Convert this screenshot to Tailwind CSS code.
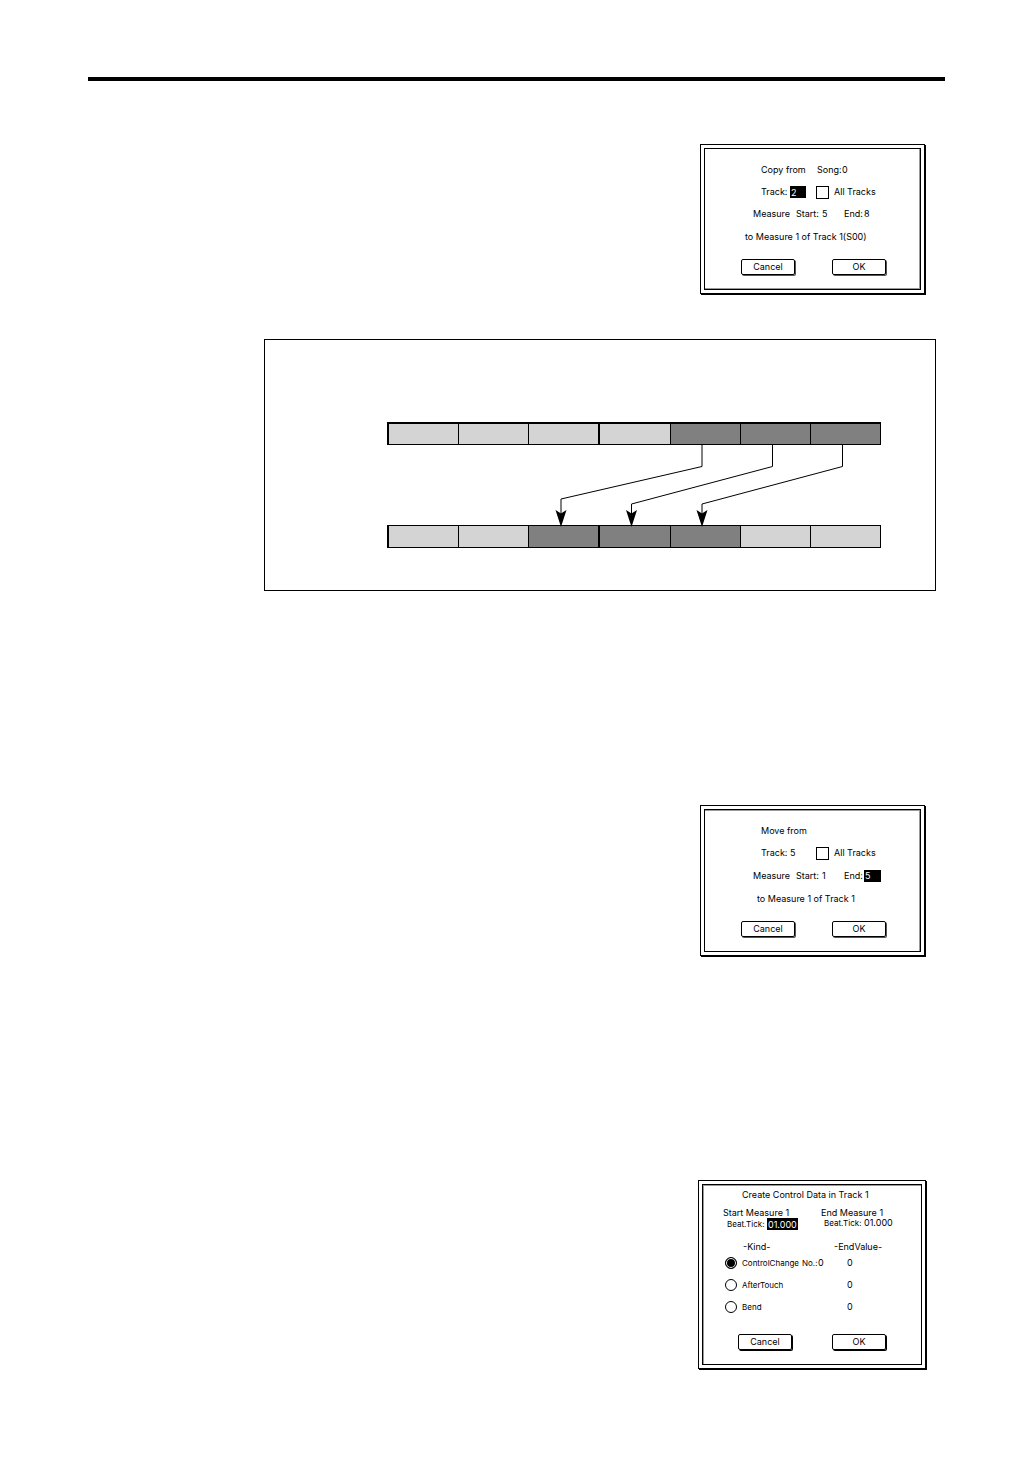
<!DOCTYPE html>
<html lang="en">
<head>
    <meta charset="UTF-8">
    <meta name="viewport" content="width=device-width, initial-scale=1.0">
    <title>Copy / Move / Create Control Data</title>
    <script src="https://cdn.jsdelivr.net/npm/@tailwindcss/browser@4"></script>
</head>
<body class="bg-white text-black font-['Inter',sans-serif] text-[9px] leading-[10px]">
    <main class="min-h-screen pt-[77px] pl-[88px] pr-[91px] pb-10">
        <hr class="border-0 h-1 bg-black">

        <!-- copy -->
        <form class="w-[225px] mt-[63px] ml-auto mr-5 border border-black p-[3px] shadow-[1px_1px_0_#000]">
            <div class="border border-black shadow-[inset_-1px_-1px_0_#999] pt-[10px] pb-[14px]">
                <div class="flex items-center h-[22px] pl-14">
                    <span class="w-14">Copy from</span>
                    <label for="copy-song" class="w-[25px]">Song:</label>
                    <input id="copy-song" type="text" value="0" class="w-4 outline-none">
                </div>
                <div class="flex items-center h-[22px] pl-14">
                    <label for="copy-track" class="w-[29px]">Track:</label>
                    <input id="copy-track" type="text" value="2" class="w-4 h-3 pl-px bg-black text-white outline-none">
                    <input id="copy-all" type="checkbox" class="appearance-none w-[13px] h-[13px] ml-[10px] border border-black checked:bg-black">
                    <label for="copy-all" class="ml-[5px]">All Tracks</label>
                </div>
                <div class="flex items-center h-[22px] pl-12">
                    <span class="w-[43px]">Measure</span>
                    <label for="copy-start" class="w-[26px]">Start:</label>
                    <input id="copy-start" type="text" value="5" class="w-[22px] outline-none">
                    <label for="copy-end" class="w-5">End:</label>
                    <input id="copy-end" type="text" value="8" class="w-4 outline-none">
                </div>
                <div class="flex items-center h-6 pl-10">to Measure 1 of Track 1(S00)</div>
                <div class="flex gap-[37px] mt-[10px] pl-9">
                    <button type="button" class="w-[54px] h-4 border border-black rounded-xs shadow-[1px_1px_0_#555]">Cancel</button>
                    <button type="button" class="w-[54px] h-4 border border-black rounded-xs shadow-[1px_1px_0_#555]">OK</button>
                </div>
            </div>
        </form>

        <!-- measures 5-7 go to 3-5 -->
        <section class="mt-[45px] ml-44 mr-[9px] border border-black pt-[82px] pr-[54px] pb-[42px] pl-[122px]">
            <div class="flex h-[23px] border-t-2 border-r border-b border-l border-black">
                <div class="flex-1 border-l border-black bg-[#d4d4d4]"></div>
                <div class="flex-1 border-l border-black bg-[#d4d4d4]"></div>
                <div class="flex-1 border-l border-black bg-[#d4d4d4]"></div>
                <div class="flex-1 border-l-2 border-black bg-[#d4d4d4]"></div>
                <div class="flex-1 border-l border-black bg-[#808080]"></div>
                <div class="flex-1 border-l border-black bg-[#808080]"></div>
                <div class="flex-1 border-l border-black bg-[#808080]"></div>
            </div>
            <svg viewBox="0 0 494 80" class="block w-full overflow-visible relative" fill="none" stroke="#000">
                <path d="M315 0V21.500L174 54V70M385.500 0V21.500L244.500 59V70M455.500 0V21.500L315 59V70"/>
                <g fill="#000" stroke="none">
                    <path d="M174 82L168.500 65L174 68.500L179.500 65Z"/>
                    <path d="M244.500 82L239 65L244.500 68.500L250 65Z"/>
                    <path d="M315 82L309.500 65L315 68.500L320.500 65Z"/>
                </g>
            </svg>
            <div class="flex h-[23px] border border-black">
                <div class="flex-1 border-l border-black bg-[#d4d4d4]"></div>
                <div class="flex-1 border-l border-black bg-[#d4d4d4]"></div>
                <div class="flex-1 border-l border-black bg-[#808080]"></div>
                <div class="flex-1 border-l-2 border-black bg-[#808080]"></div>
                <div class="flex-1 border-l border-black bg-[#808080]"></div>
                <div class="flex-1 border-l border-black bg-[#d4d4d4]"></div>
                <div class="flex-1 border-l border-black bg-[#d4d4d4]"></div>
            </div>
        </section>

        <!-- move -->
        <form class="w-[225px] mt-[214px] ml-auto mr-5 border border-black p-[3px] shadow-[1px_1px_0_#000]">
            <div class="border border-black shadow-[inset_-1px_1px_0_#999] pt-[10px] pb-[14px]">
                <div class="flex items-center h-[22px] pl-14">Move from</div>
                <div class="flex items-center h-[22px] pl-14">
                    <label for="move-track" class="w-[29px]">Track:</label>
                    <input id="move-track" type="text" value="5" class="w-4 outline-none">
                    <input id="move-all" type="checkbox" class="appearance-none w-[13px] h-[13px] ml-[10px] border border-black checked:bg-black">
                    <label for="move-all" class="ml-[5px]">All Tracks</label>
                </div>
                <div class="flex items-center h-[23px] pl-12">
                    <span class="w-[43px]">Measure</span>
                    <label for="move-start" class="w-[26px]">Start:</label>
                    <input id="move-start" type="text" value="1" class="w-[22px] outline-none">
                    <label for="move-end" class="w-5">End:</label>
                    <input id="move-end" type="text" value="5" class="w-[17px] h-3 pl-px bg-black text-white outline-none">
                </div>
                <div class="flex items-center h-6 pl-[52px]">to Measure 1 of Track 1</div>
                <div class="flex gap-[37px] mt-[10px] pl-9">
                    <button type="button" class="w-[54px] h-4 border border-black rounded-xs shadow-[1px_1px_0_#555]">Cancel</button>
                    <button type="button" class="w-[54px] h-4 border border-black rounded-xs shadow-[1px_1px_0_#555]">OK</button>
                </div>
            </div>
        </form>

        <!-- create control data -->
        <form class="w-[228px] mt-[224px] ml-auto mr-[19px] border border-black p-[3px] shadow-[1px_1px_0_#000]">
            <div class="border border-black shadow-[inset_1px_1px_0_#999] pt-[5px] pb-[14px]">
                <div class="pl-[39px]">Create Control Data in Track 1</div>
                <div class="flex mt-2 pl-5">
                    <div class="w-[98px]">
                        <div>Start Measure 1</div>
                        <div class="flex items-center pl-1">
                            <label for="start-tick" class="w-10 text-[8px]">Beat.Tick:</label>
                            <input id="start-tick" type="text" value="01.000" class="w-[31px] h-3 pl-px bg-black text-white outline-none">
                        </div>
                    </div>
                    <div>
                        <div>End Measure 1</div>
                        <div class="flex items-center pl-[3px]">
                            <label for="end-tick" class="w-10 text-[8px]">Beat.Tick:</label>
                            <input id="end-tick" type="text" value="01.000" class="w-[31px] outline-none">
                        </div>
                    </div>
                </div>
                <div class="flex mt-3 pl-10">
                    <span class="w-[91px]">-Kind-</span>
                    <span>-EndValue-</span>
                </div>
                <div class="flex items-center h-[22px] pl-[22px]">
                    <input id="kind-cc" type="radio" name="kind" checked class="appearance-none w-3 h-3 rounded-full border border-black checked:bg-black checked:shadow-[inset_0_0_0_1px_#fff]">
                    <label for="kind-cc" class="w-[60px] ml-[5px] text-[8px] whitespace-nowrap">ControlChange</label>
                    <label for="cc-no" class="w-4 text-[8px]">No.:</label>
                    <input id="cc-no" type="text" value="0" class="w-[29px] outline-none">
                    <input type="text" value="0" aria-label="ControlChange end value" class="w-4 outline-none">
                </div>
                <div class="flex items-center h-[22px] pl-[22px]">
                    <input id="kind-at" type="radio" name="kind" class="appearance-none w-3 h-3 rounded-full border border-black checked:bg-black checked:shadow-[inset_0_0_0_1px_#fff]">
                    <label for="kind-at" class="w-[105px] ml-[5px] text-[8px]">AfterTouch</label>
                    <input type="text" value="0" aria-label="AfterTouch end value" class="w-4 outline-none">
                </div>
                <div class="flex items-center h-[22px] pl-[22px]">
                    <input id="kind-bend" type="radio" name="kind" class="appearance-none w-3 h-3 rounded-full border border-black checked:bg-black checked:shadow-[inset_0_0_0_1px_#fff]">
                    <label for="kind-bend" class="w-[105px] ml-[5px] text-[8px]">Bend</label>
                    <input type="text" value="0" aria-label="Bend end value" class="w-4 outline-none">
                </div>
                <div class="flex gap-10 mt-4 pl-[35px]">
                    <button type="button" class="w-[54px] h-4 border border-black rounded-xs shadow-[1px_1px_0_#000]">Cancel</button>
                    <button type="button" class="w-[54px] h-4 border border-black rounded-xs shadow-[1px_1px_0_#000]">OK</button>
                </div>
            </div>
        </form>
    </main>
</body>
</html>
